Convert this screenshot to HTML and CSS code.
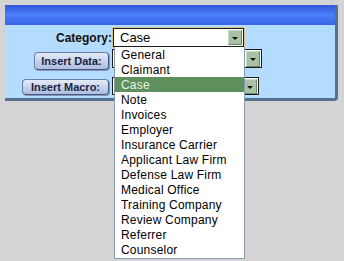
FILE: index.html
```html
<!DOCTYPE html>
<html>
<head>
<meta charset="utf-8">
<link rel="stylesheet" href="styles.css">
</head>
<body>
<div class="panel">
  <div class="head"></div>
  <div class="form">
    <div class="row r1">
      <span class="lbl">Category:</span>
      <div class="select s1"><span class="val">Case</span><span class="arrow"></span></div>
    </div>
    <div class="row r2">
      <button class="btn b1">Insert Data:</button>
      <div class="select s2"><span class="arrow"></span></div>
    </div>
    <div class="row r3">
      <button class="btn b2">Insert Macro:</button>
      <div class="select s3"><span class="arrow"></span></div>
    </div>
  </div>
</div>
<ul class="list">
  <li>General</li>
  <li>Claimant</li>
  <li class="sel">Case</li>
  <li>Note</li>
  <li>Invoices</li>
  <li>Employer</li>
  <li>Insurance Carrier</li>
  <li>Applicant Law Firm</li>
  <li>Defense Law Firm</li>
  <li>Medical Office</li>
  <li>Training Company</li>
  <li>Review Company</li>
  <li>Referrer</li>
  <li>Counselor</li>
</ul>
</body>
</html>
```

FILE: styles.css
```css
html, body { margin: 0; padding: 0; }
body {
  background: #d4d4d4;
  width: 344px;
  height: 261px;
  overflow: hidden;
  padding: 5px 0 0 5px;
  box-sizing: border-box;
  font-family: "Liberation Sans", Arial, sans-serif;
  position: relative;
}
.panel {
  width: 330px;
  height: 93px;
  background: #b4dcfe;
  border-right: 3px solid #56708f;
  border-bottom: 3px solid #56708f;
  border-bottom-right-radius: 4px;
}
.head {
  height: 20px;
  background: linear-gradient(#3156dc, #4b80f6 50%, #3a63e8);
}
.form {
  display: flex;
  flex-direction: column;
  padding-top: 3px;
}
.row {
  display: grid;
  grid-template-columns: 108px auto;
  align-items: start;
}
.lbl {
  justify-self: end;
  font-weight: bold;
  font-size: 12px;
  color: #101010;
  margin-top: 3px;
  padding-right: 1px;
}
.select {
  position: relative;
  background: #fff;
  box-sizing: border-box;
  border: 1px solid #1c1c1c;
}
.s1 {
  width: 131px;
  height: 19px;
  box-shadow: 0 0 0 1px #d6c68c;
}
.val {
  display: block;
  font-size: 13px;
  line-height: 18px;
  padding-left: 6px;
  color: #000;
}
.arrow {
  position: absolute;
  top: 1px;
  right: 1px;
  width: 14px;
  height: 15px;
  box-sizing: border-box;
  background: #a8c2a6;
  border: 1px solid #c8dcc6;
  border-right-color: #6d826b;
  border-bottom-color: #6d826b;
}
.arrow::after {
  content: "";
  position: absolute;
  left: 3px;
  top: 6px;
  border-left: 3px solid transparent;
  border-right: 3px solid transparent;
  border-top: 3px solid #111;
}
.r2 { margin-top: 2px; }
.s2 {
  width: 150px;
  height: 19px;
  margin-left: -1px;
}
.s2 .arrow { height: 16px; }
.r3 { margin-top: 9px; }
.s3 {
  width: 147px;
  height: 18px;
  margin-left: -1px;
  margin-top: -2px;
}
.s3 .arrow { height: 15px; }
.btn {
  justify-self: end;
  margin-right: 4px;
  height: 18px;
  padding: 0 6px;
  font-family: "Liberation Sans", Arial, sans-serif;
  font-weight: bold;
  font-size: 11px;
  color: #1a2440;
  border: 1px solid #6a7ea6;
  border-right-color: #48597d;
  border-bottom-color: #48597d;
  border-radius: 4px;
  background: linear-gradient(#e4ebf8, #c3cfea 60%, #aebde0);
  box-shadow: 1px 1px 0 #8096bb;
}
.b1 { margin-top: 3px; width: 75px; }
.b2 { width: 87px; height: 16px; }
.list {
  position: absolute;
  left: 114px;
  top: 47px;
  width: 131px;
  height: 212px;
  margin: 0;
  padding: 0;
  list-style: none;
  background: #fff;
  border: 1px solid #8a9bb0;
  border-top: none;
  box-sizing: border-box;
  z-index: 2;
}
.list li {
  height: 15px;
  line-height: 17px;
  font-size: 12px;
  padding-left: 6px;
  color: #000;
  letter-spacing: 0.2px;
  overflow: hidden;
}
.list li.sel {
  background: #5e905e;
  color: #e8f0e8;
}
```
